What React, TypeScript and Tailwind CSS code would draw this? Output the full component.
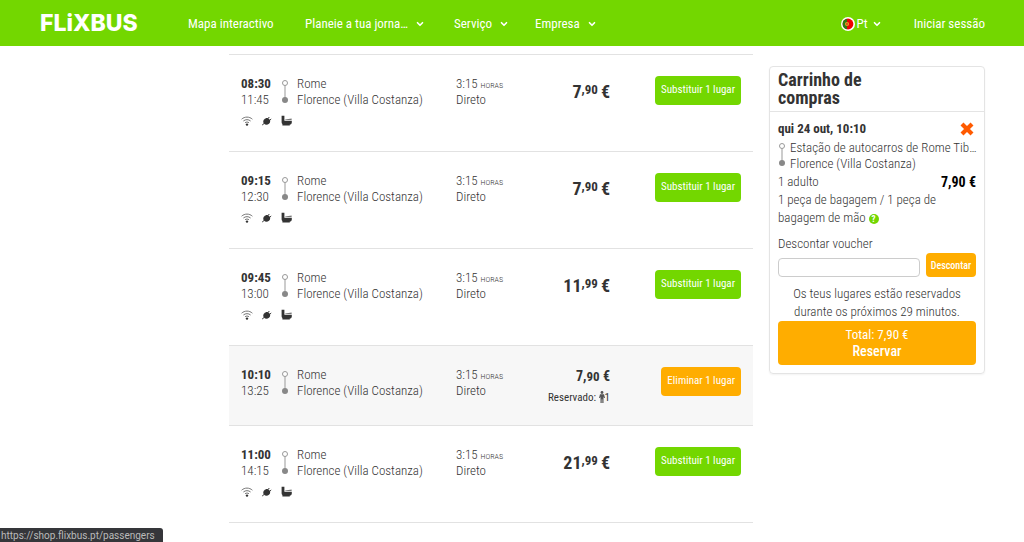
import { ChevronDown } from 'lucide-react';

type Trip = {
  departure: string;
  arrival: string;
  euros: string;
  cents: string;
  reserved?: boolean;
};

const NAV_ITEMS = [
  { label: 'Mapa interactivo', width: 'w-[117px]', menu: false },
  { label: 'Planeie a tua jorna…', width: 'w-[149px]', menu: true },
  { label: 'Serviço', width: 'w-[81px]', menu: true },
  { label: 'Empresa', width: 'w-[81px]', menu: true },
];

const TRIPS: Trip[] = [
  { departure: '08:30', arrival: '11:45', euros: '7', cents: '90' },
  { departure: '09:15', arrival: '12:30', euros: '7', cents: '90' },
  { departure: '09:45', arrival: '13:00', euros: '11', cents: '99' },
  { departure: '10:10', arrival: '13:25', euros: '7', cents: '90', reserved: true },
  { departure: '11:00', arrival: '14:15', euros: '21', cents: '99' },
];

function PortugalFlag() {
  return (
    <svg viewBox="0 0 14 14" className="size-[14px]" aria-hidden="true">
      <circle cx="7" cy="7" r="7" fill="#fff" />
      <circle cx="7" cy="7" r="5.400" fill="#f00000" />
      <path d="M6 1.700a5.400 5.400 0 0 0 0 10.600z" fill="#2f7a12" />
      <circle cx="6" cy="7" r="2.100" fill="#e0a020" />
      <circle cx="6" cy="7" r=".9" fill="#d23a1a" />
    </svg>
  );
}

function RouteLine() {
  return (
    <svg viewBox="0 0 8 26" className="h-[26px] w-2 shrink-0" aria-hidden="true">
      <path d="M4 6v14" stroke="#999" strokeWidth="1" />
      <circle cx="4" cy="4" r="2.500" fill="#fff" stroke="#999" strokeWidth="1" />
      <circle cx="4" cy="21" r="3" fill="#888" />
    </svg>
  );
}

function WifiIcon() {
  return (
    <svg viewBox="0 0 12 10" className="h-[10px] w-3" fill="none" stroke="#777" aria-hidden="true">
      <path d="M.6 3.200C3.600.4 8.400.4 11.400 3.200M2.400 5c2-1.800 5.200-1.800 7.200 0M4 6.800c1.100-1 2.900-1 4 0" />
      <circle cx="6" cy="8.600" r="1.200" fill="#333" stroke="none" />
    </svg>
  );
}

function PlugIcon() {
  return (
    <svg viewBox="0 0 12 10" className="h-[10px] w-3" fill="#333" aria-hidden="true">
      <path d="M3.200 3.600C4.600 1.700 6.800 1.600 8.200 2.900c1.300 1.300 1.400 3.400-.2 4.900-1.600 1.200-3.700 1.200-4.900 0-1.200-1.200-1-3-.1-4.200z" />
      <path d="M6.800 2.600 8.400 1M8.400 4.600l1.800-1.600M3.200 7.400 1.200 9" stroke="#333" fill="none" />
    </svg>
  );
}

function ToiletIcon() {
  return (
    <svg viewBox="0 0 12 11" className="h-[11px] w-3" fill="#333" aria-hidden="true">
      <path d="M.6.8h2.800v5h7.400v1.600c0 1.200-.8 2-2 2.200v.8H1.400V9C.8 8.600.6 8 .6 7.200z" />
      <path d="M4.200 4.600 10.600 3.600v1.400H4.200z" fill="#777" />
    </svg>
  );
}

function PersonIcon() {
  return (
    <svg viewBox="0 0 6 12" className="inline-block h-3 w-[6px] align-[-2px]" fill="#555" aria-hidden="true">
      <circle cx="3" cy="1.500" r="1.400" />
      <path d="M1 3.300h4L6 7H5l-.5-1.500V12H3.300V8.300h-.6V12H1.500V5.500L1 7H0z" />
    </svg>
  );
}

function Header() {
  return (
    <header className="flex h-[46px] items-center bg-[#73d700] pr-[39px] pl-10 text-[13px] text-white">
      <a href="#" className="w-[148px] font-['Inter',sans-serif] text-[23px] leading-[44px] font-extrabold">
        FLiXBUS
      </a>
      <nav className="flex h-full items-center pt-[2px]">
        {NAV_ITEMS.map((item) => (
          <a key={item.label} href="#" className={`flex items-center gap-[7px] whitespace-nowrap ${item.width}`}>
            {item.label}
            {item.menu && <ChevronDown className="size-[10px]" strokeWidth={4} />}
          </a>
        ))}
      </nav>
      <div className="ml-auto flex h-full items-center gap-8 pt-[2px]">
        <button className="flex items-center gap-[2px]">
          <PortugalFlag />
          Pt
          <ChevronDown className="ml-[2px] size-[10px]" strokeWidth={4} />
        </button>
        <a href="#">Iniciar sessão</a>
      </div>
    </header>
  );
}

function Price({ trip }: { trip: Trip }) {
  if (trip.reserved) {
    return (
      <div className="text-right">
        <p className="text-[14px] leading-[18px] font-bold text-[#333]">
          {trip.euros},<span className="text-[13px]">{trip.cents}</span> €
        </p>
        <p className="pt-1 text-[11px] leading-4 font-normal">
          Reservado: <PersonIcon />1
        </p>
      </div>
    );
  }

  return (
    <p className="flex justify-end pt-1 text-[18px] leading-6 font-bold text-[#333]">
      {trip.euros}
      <span className="text-[13px] leading-5">,{trip.cents}</span>
      <span className="ml-[3px]">€</span>
    </p>
  );
}

function TripRow({ trip }: { trip: Trip }) {
  return (
    <li
      className={`flex items-start border-t border-[#e2e2e2] px-3 pt-[21px] ${
        trip.reserved ? 'h-20 bg-[#f7f7f7]' : 'h-[97px]'
      }`}
    >
      <div className="w-[215px] leading-4">
        <div className="flex">
          <div className="w-10">
            <p className="font-bold text-[#333]">{trip.departure}</p>
            <p>{trip.arrival}</p>
          </div>
          <div className="flex w-4 pt-[3px]">
            <RouteLine />
          </div>
          <div className="whitespace-nowrap">
            <p>Rome</p>
            <p>Florence (Villa Costanza)</p>
          </div>
        </div>
        {!trip.reserved && (
          <div className="flex items-center gap-2 pt-[7px]">
            <WifiIcon />
            <PlugIcon />
            <ToiletIcon />
          </div>
        )}
      </div>
      <div className="w-[70px] leading-4">
        <p>
          3:15 <span className="text-[8px] leading-none uppercase">horas</span>
        </p>
        <p>Direto</p>
      </div>
      <div className="flex-1">
        <Price trip={trip} />
      </div>
      <div className="flex w-[131px] justify-end">
        <button
          className={`h-[29px] rounded-[4px] px-[6px] text-[11px] font-normal whitespace-nowrap text-white ${
            trip.reserved ? 'bg-[#ffad00]' : 'bg-[#73d700]'
          }`}
        >
          {trip.reserved ? 'Eliminar 1 lugar' : 'Substituir 1 lugar'}
        </button>
      </div>
    </li>
  );
}

function Cart() {
  return (
    <aside className="mt-3 w-[216px] shrink-0 self-start rounded-[4px] border border-[#e4e4e4] shadow-xs">
      <h2 className="border-b border-[#e4e4e4] px-2 pt-1 pb-1 text-[18px] leading-[18px] font-bold text-[#333]">
        Carrinho de
        <br />
        compras
      </h2>
      <div className="p-2">
        <div className="flex items-center justify-between leading-[17px]">
          <p className="font-bold text-[#333]">qui 24 out, 10:10</p>
          <button aria-label="Remover" className="mr-[2px]">
            <svg viewBox="0 0 14 14" className="size-[14px]" aria-hidden="true">
              <path d="M2 2 12 12M12 2 2 12" stroke="#ff5a00" strokeWidth="4.200" />
            </svg>
          </button>
        </div>
        <div className="flex gap-1 pt-[3px] leading-4">
          <div className="pt-[2px]">
            <RouteLine />
          </div>
          <div className="whitespace-nowrap">
            <p>Estação de autocarros de Rome Tib…</p>
            <p>Florence (Villa Costanza)</p>
          </div>
        </div>
        <div className="flex justify-between pt-px leading-[18px]">
          <p>1 adulto</p>
          <p className="text-[14px] font-bold text-black">7,90 €</p>
        </div>
        <p className="leading-[18px]">
          1 peça de bagagem / 1 peça de
          <br />
          bagagem de mão{' '}
          <button
            aria-label="Ajuda"
            className="size-[10px] rounded-full bg-[#73d700] text-[9px] leading-[10px] font-bold text-white"
          >
            ?
          </button>
        </p>
        <form onSubmit={(e) => e.preventDefault()}>
          <label htmlFor="voucher" className="block pt-2 leading-[18px]">
            Descontar voucher
          </label>
          <div className="flex items-end gap-[6px]">
            <input
              id="voucher"
              type="text"
              className="h-[19px] min-w-0 flex-1 rounded-[4px] border border-[#ccc] px-1 text-[12px] outline-none"
            />
            <button className="h-6 w-[50px] rounded-[4px] bg-[#ffad00] text-[10px] font-medium text-white">
              Descontar
            </button>
          </div>
        </form>
        <p className="pt-2 text-center leading-[18px]">
          Os teus lugares estão reservados
          <br />
          durante os próximos 29 minutos.
        </p>
        <button className="h-11 w-full rounded-[4px] bg-[#ffad00] leading-[17px] font-normal text-white">
          Total: 7,90 €
          <br />
          <span className="text-[14px] leading-none font-medium">Reservar</span>
        </button>
      </div>
    </aside>
  );
}

export default function App() {
  return (
    <div className="min-h-screen bg-white font-['Roboto_Condensed','Liberation_Sans_Narrow','Roboto',sans-serif] text-[13px] text-[#333]">
      <Header />
      <main className="flex gap-4 pt-2 pr-[39px] pl-[229px] font-light">
        <ul className="min-w-0 flex-1 border-b border-[#e2e2e2]">
          {TRIPS.map((trip) => (
            <TripRow key={trip.departure} trip={trip} />
          ))}
        </ul>
        <Cart />
      </main>
      <div className="fixed bottom-0 left-0 h-[14px] rounded-tr-[3px] bg-[#35363a] pr-[8px] pl-[1px] font-['Roboto',sans-serif] text-[10px] leading-[16px] text-[#bbb]">
        https://shop.flixbus.pt/passengers
      </div>
    </div>
  );
}
